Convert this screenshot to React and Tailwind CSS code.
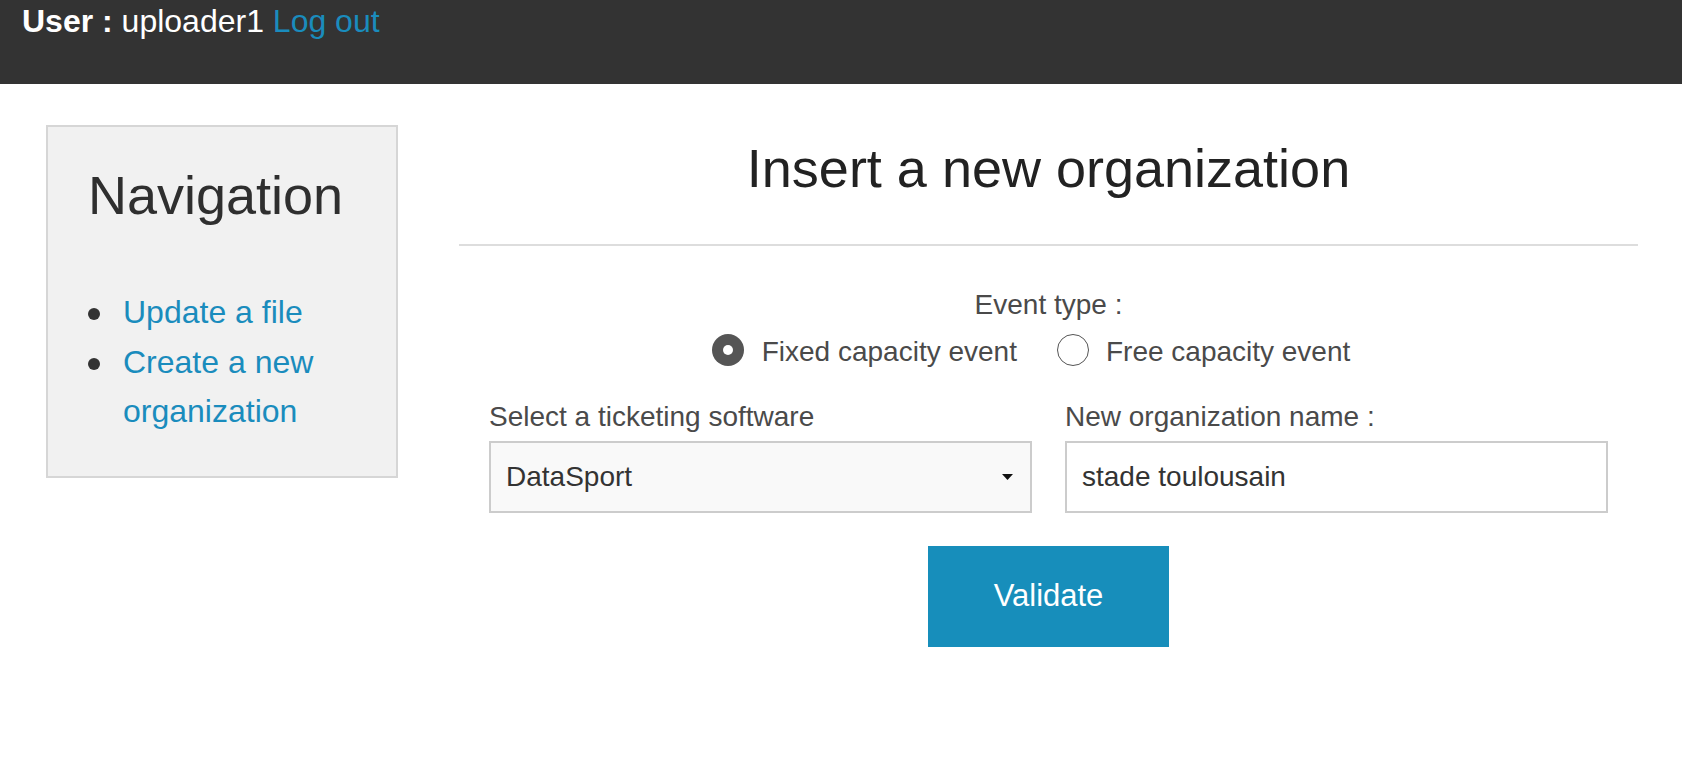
export default function App() {
  const font = { fontFamily: '"Liberation Sans", Arial, Helvetica, sans-serif' };
  return (
    <div className="min-h-[784px] w-full bg-white" style={font}>
      <header className="h-[84px] bg-[#333333] pl-[22px] pt-[3px]">
        <div className="text-[32px] leading-[36px] text-white">
          <span className="font-bold">User :</span> uploader1{' '}
          <a className="text-[#1a8cbd]">Log out</a>
        </div>
      </header>

      <div className="flex">
        <aside className="ml-[46px] mt-[41px] h-[353px] w-[352px] border-2 border-[#d6d6d6] bg-[#f1f1f1] pl-[40px] pr-[32px] pt-[38px]">
          <h2 className="text-[54px] leading-[60px] text-[#2f2f2f]">Navigation</h2>
          <ul className="mt-[63px] text-[32px] leading-[49.5px] text-[#1a8cbd]">
            <li className="flex">
              <div className="w-[35px] shrink-0 pt-[20px]">
                <div className="h-[12px] w-[12px] rounded-full bg-[#333333]" />
              </div>
              <a>Update a file</a>
            </li>
            <li className="flex">
              <div className="w-[35px] shrink-0 pt-[20px]">
                <div className="h-[12px] w-[12px] rounded-full bg-[#333333]" />
              </div>
              <a>Create a new organization</a>
            </li>
          </ul>
        </aside>

        <main className="ml-[61px] w-[1179px]">
          <h1 className="mt-[54px] text-center text-[54px] leading-[60px] text-[#222222]">
            Insert a new organization
          </h1>
          <div className="mt-[46px] h-[2px] bg-[#dddddd]" />

          <div className="mt-[43px] text-center text-[28px] leading-[32px] text-[#4a4a4a]">
            Event type :
          </div>
          <div className="mt-[15px] flex justify-center pr-[35px] text-[28px] leading-[32px] text-[#4a4a4a]">
            <label className="flex items-start">
              <span className="-mt-[2px] flex h-[32px] w-[32px] items-center justify-center rounded-full bg-[#555555]">
                <span className="h-[10px] w-[10px] rounded-full bg-white" />
              </span>
              <span className="ml-[18px]">Fixed capacity event</span>
            </label>
            <label className="ml-[40px] flex items-start">
              <span className="-mt-[2px] h-[32px] w-[32px] rounded-full border-[1.5px] border-[#555555] bg-white" />
              <span className="ml-[17px]">Free capacity event</span>
            </label>
          </div>

          <div className="mt-[33px] grid grid-cols-2 gap-x-[33px] px-[30px]">
            <div>
              <div className="text-[28px] leading-[32px] text-[#4a4a4a]">Select a ticketing software</div>
              <div className="mt-[8px] flex h-[72px] items-center justify-between border-2 border-[#cccccc] bg-[#f9f9f9] pl-[15px] pr-[17px]">
                <span className="text-[28px] leading-[32px] text-[#333333]">DataSport</span>
                <svg width="11" height="6" viewBox="0 0 11 6">
                  <polygon points="0,0 11,0 5.5,6" fill="#111111" />
                </svg>
              </div>
            </div>
            <div>
              <div className="text-[28px] leading-[32px] text-[#4a4a4a]">New organization name :</div>
              <div className="mt-[8px] flex h-[72px] items-center border-2 border-[#cccccc] bg-white pl-[15px]">
                <span className="text-[28px] leading-[32px] text-[#333333]">stade toulousain</span>
              </div>
            </div>
          </div>

          <div className="mt-[33px] flex justify-center">
            <button className="flex h-[101px] w-[241px] items-center justify-center bg-[#178ebb] text-[31px] text-white">
              Validate
            </button>
          </div>
        </main>
      </div>
    </div>
  );
}
